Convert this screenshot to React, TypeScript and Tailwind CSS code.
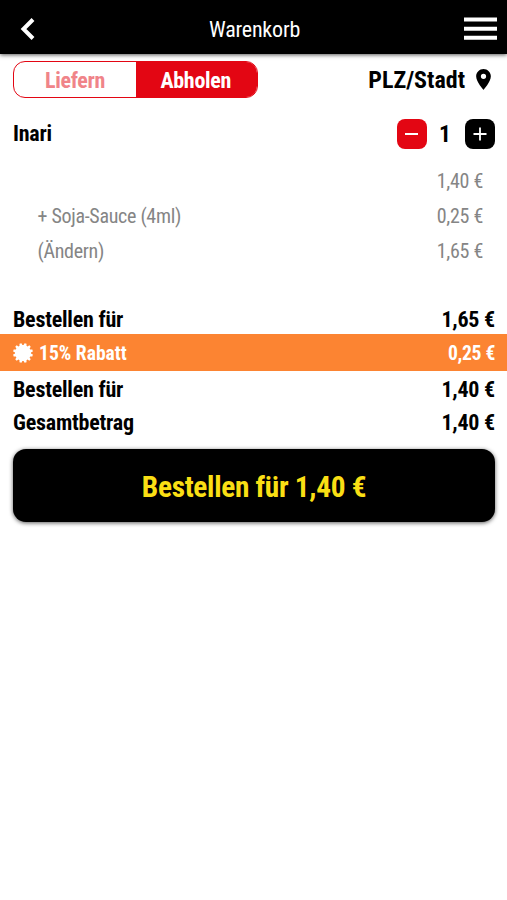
import React from "react";

type TextProps = { children: React.ReactNode; className?: string };

function Label({ children, className = "" }: TextProps) {
  return <span className={`block whitespace-nowrap ${className}`}>{children}</span>;
}

function SubRow({ label, price }: { label?: string; price: string }) {
  return (
    <div className="flex h-[35.4px] items-center justify-between pl-[37.5px] pr-6 text-[20px] tracking-[-0.3px] text-[#858585]">
      <Label>{label}</Label>
      <Label>{price}</Label>
    </div>
  );
}

function TotalRow({ label, price, className = "" }: { label: string; price: string; className?: string }) {
  return (
    <div className={`flex items-center justify-between px-3 pl-[13px] text-[22px] font-bold tracking-[-0.22px] text-black ${className}`}>
      <Label>{label}</Label>
      <Label>{price}</Label>
    </div>
  );
}

// Discount seal: twelve blunt teeth around a disc
const seal = Array.from({ length: 12 }, (_, i) =>
  [
    [-0.19, 8],
    [-0.1, 10],
    [0.1, 10],
    [0.19, 8],
  ]
    .map(([offset, r]) => {
      const a = ((i + 0.5) * Math.PI) / 6 + offset;
      return `${(10 + r * Math.cos(a)).toFixed(2)},${(10 + r * Math.sin(a)).toFixed(2)}`;
    })
    .join(" ")
).join(" ");

export default function App() {
  return (
    <div className="flex h-[900px] w-[507px] flex-col bg-white font-['Roboto_Condensed','Roboto',sans-serif] leading-none [font-stretch:condensed]">
      <header className="flex h-[54px] shrink-0 items-center justify-between bg-black pl-5 pr-[9px] pt-[3px] text-white shadow-[0_1px_4px_rgba(0,0,0,0.65)]">
        <svg className="h-[22px] w-[26px]" viewBox="0 0 26 22" fill="none" stroke="white" strokeWidth="4">
          <path d="M13 1.5 3.5 11l9.5 9.5" />
        </svg>
        <Label className="pt-0.5 text-[22px] tracking-[-0.2px]">Warenkorb</Label>
        <svg className="h-6 w-[35px]" viewBox="0 0 35 24" fill="white">
          <path d="M1 .5h33v4H1zM1 9.7h33v4H1zM1 18.7h33v4H1z" />
        </svg>
      </header>

      <div className="mt-[6px] flex h-[38px] items-center justify-between pl-[13px] pr-4">
        <div className="flex h-[37px] w-[244.5px] overflow-hidden rounded-[12px] border border-[#e30613] text-[22px] font-bold tracking-[-0.3px]">
          <div className="flex w-[122px] items-center justify-center pt-1 text-[#f08489]">
            <Label>Liefern</Label>
          </div>
          <div className="flex flex-1 items-center justify-center bg-[#e30613] pt-1 pr-px text-white">
            <Label>Abholen</Label>
          </div>
        </div>
        <div className="flex items-center gap-[11px] text-[24px] font-bold">
          <Label className="pt-0.5">PLZ/Stadt</Label>
          <svg className="h-[21px] w-[15px]" viewBox="5 2 14 20" fill="black">
            <path d="M12 2C8.13 2 5 5.13 5 9c0 5.25 7 13 7 13s7-7.75 7-13c0-3.87-3.13-7-7-7zm0 9.5a2.5 2.5 0 1 1 0-5 2.5 2.5 0 0 1 0 5z" />
          </svg>
        </div>
      </div>

      <div className="mt-5 flex h-[32px] items-center justify-between pl-[13px] pr-3 text-[22px] font-bold">
        <Label className="tracking-[-0.2px]">Inari</Label>
        <div className="flex items-center">
          <div className="flex h-[30px] w-[30.5px] items-center justify-center rounded-[8px] bg-[#e30613]">
            <div className="h-[2px] w-[13px] bg-white" />
          </div>
          <Label className="w-[38px] pt-0.5 pr-0.5 text-center text-[23.5px]">1</Label>
          <div className="flex h-[30px] w-[30px] items-center justify-center rounded-[8px] bg-black">
            <svg className="h-[14px] w-[14px]" viewBox="0 0 14 14" stroke="white" strokeWidth="1.8">
              <path d="M7 .5v13M.5 7h13" />
            </svg>
          </div>
        </div>
      </div>

      <div className="mt-[13px]">
        <SubRow price="1,40 €" />
        <SubRow label="+ Soja-Sauce (4ml)" price="0,25 €" />
        <SubRow label="(Ändern)" price="1,65 €" />
      </div>

      <div className="mt-[34px]">
        <TotalRow label="Bestellen für" price="1,65 €" className="h-[31px] pt-0.5" />
        <div className="flex h-[37px] items-center justify-between bg-[#fc8432] pl-[13px] pr-3 pt-0.5 text-[19.6px] font-bold text-white">
          <div className="flex items-center gap-[6px]">
            <svg className="mb-px h-5 w-5" viewBox="0 0 20 20" fill="white">
              <polygon points={seal} />
            </svg>
            <Label>15% Rabatt</Label>
          </div>
          <Label className="tracking-[-0.3px]">0,25 €</Label>
        </div>
        <TotalRow label="Bestellen für" price="1,40 €" className="h-[35px] pt-0.5" />
        <TotalRow label="Gesamtbetrag" price="1,40 €" className="h-[33px]" />
      </div>

      <button className="mx-3 mt-[10px] ml-[13px] flex h-[73px] items-center justify-center rounded-[13px] bg-black pt-1 text-[29.3px] font-bold tracking-[-0.3px] text-[#fadf14] shadow-[0_1px_4px_rgba(0,0,0,0.65)]">
        <Label>Bestellen für 1,40 €</Label>
      </button>
    </div>
  );
}
